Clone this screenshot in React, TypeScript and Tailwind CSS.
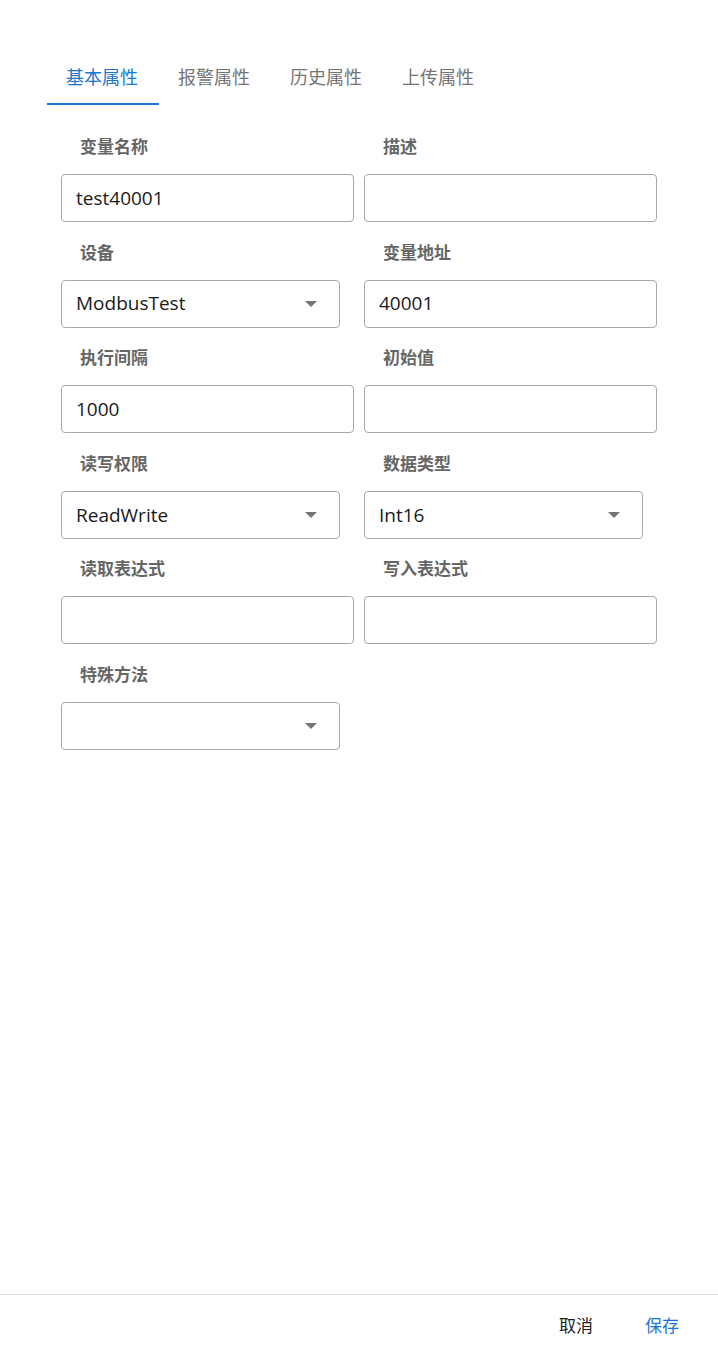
import React from "react";

const font = { fontFamily: '"Open Sans", "Noto Sans CJK SC", sans-serif' };

function Caret() {
  return (
    <svg width="12" height="6" viewBox="0 0 12 6" className="shrink-0">
      <path d="M0 0 L12 0 L6 6 Z" fill="#757575" />
    </svg>
  );
}

function Field({ label, value, select, narrow }: { label: string; value?: string; select?: boolean; narrow?: boolean }) {
  return (
    <div className="flex flex-col">
      <div className="h-[24px] leading-[24px] pl-[19px] text-[17px] font-bold text-[#666666] mb-[15px]">{label}</div>
      <div
        className={
          "h-[48px] rounded-[4px] border border-[#a8a8a8] flex items-center pl-[14px] text-[19px] text-[#1a1a1a] " +
          (narrow ? "w-[279px] pr-[22px] justify-between" : "w-full")
        }
      >
        <span>{value ?? ""}</span>
        {select ? <Caret /> : null}
      </div>
    </div>
  );
}

export default function App() {
  const tabs = ["基本属性", "报警属性", "历史属性", "上传属性"];
  return (
    <div className="w-[718px] h-[1356px] bg-white flex flex-col" style={font}>
      <div className="flex-1">
        <div className="flex pl-[47px] pt-[50px]">
          {tabs.map((t, i) => (
            <div key={t} className="w-[112px] h-[55px] relative flex items-center justify-center pb-[1px] pr-[2px]">
              <span className={"text-[18px] " + (i === 0 ? "text-[#1976d2]" : "text-[#757575]")}>{t}</span>
              {i === 0 ? <div className="absolute left-0 right-0 bottom-0 h-[2px] bg-[#1976d2]" /> : null}
            </div>
          ))}
        </div>
        <div className="px-[61px] pt-[30px] grid grid-cols-2 gap-x-[10px] gap-y-[18.6px]">
          <Field label="变量名称" value="test40001" />
          <Field label="描述" />
          <Field label="设备" value="ModbusTest" select narrow />
          <Field label="变量地址" value="40001" />
          <Field label="执行间隔" value="1000" />
          <Field label="初始值" />
          <Field label="读写权限" value="ReadWrite" select narrow />
          <Field label="数据类型" value="Int16" select narrow />
          <Field label="读取表达式" />
          <Field label="写入表达式" />
          <Field label="特殊方法" select narrow />
        </div>
      </div>
      <div className="h-[62px] border-t border-[#e0e0e0] flex items-center justify-end pr-[39px] gap-[52px] text-[17px]">
        <span className="text-[#222222]">取消</span>
        <span className="text-[#1976d2]">保存</span>
      </div>
    </div>
  );
}
